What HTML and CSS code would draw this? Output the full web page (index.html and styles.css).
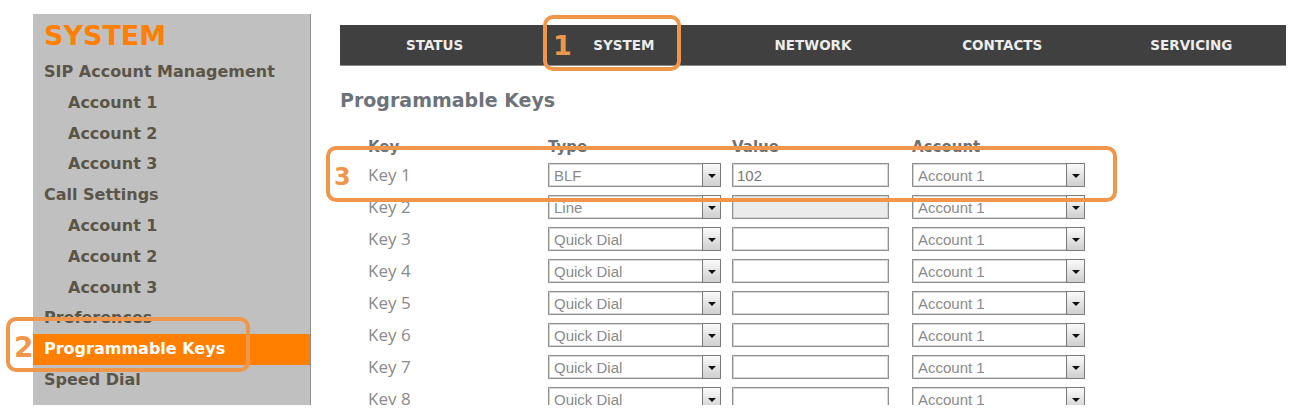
FILE: index.html
```html
<!DOCTYPE html>
<html lang="en">
<head>
  <meta charset="UTF-8">
  <meta name="viewport" content="width=device-width, initial-scale=1.0">
  <title>Programmable Keys</title>
  <link rel="stylesheet" href="styles.css">
</head>
<body>
  <div class="page">
    <div class="sidebar">
      <h1>SYSTEM</h1>
      <ul class="menu">
        <li class="group">SIP Account Management</li>
        <li class="sub">Account 1</li>
        <li class="sub">Account 2</li>
        <li class="sub">Account 3</li>
        <li class="group">Call Settings</li>
        <li class="sub">Account 1</li>
        <li class="sub">Account 2</li>
        <li class="sub">Account 3</li>
        <li class="group">Preferences</li>
        <li class="group active">Programmable Keys</li>
        <li class="group">Speed Dial</li>
      </ul>
    </div>

    <div class="main">
      <div class="nav">
        <span>STATUS</span>
        <span>SYSTEM</span>
        <span>NETWORK</span>
        <span>CONTACTS</span>
        <span>SERVICING</span>
      </div>

      <h2>Programmable Keys</h2>

      <div class="keys">
        <div class="head">Key</div>
        <div class="head">Type</div>
        <div class="head">Value</div>
        <div class="head">Account</div>

        <div class="key">Key 1</div>
        <div class="select"><select><option>BLF</option></select><span class="select-btn"></span></div>
        <input class="value" type="text" value="102">
        <div class="select"><select><option>Account 1</option></select><span class="select-btn"></span></div>

        <div class="key">Key 2</div>
        <div class="select"><select><option>Line</option></select><span class="select-btn"></span></div>
        <input class="value" type="text" disabled>
        <div class="select"><select><option>Account 1</option></select><span class="select-btn"></span></div>

        <div class="key">Key 3</div>
        <div class="select"><select><option>Quick Dial</option></select><span class="select-btn"></span></div>
        <input class="value" type="text">
        <div class="select"><select><option>Account 1</option></select><span class="select-btn"></span></div>

        <div class="key">Key 4</div>
        <div class="select"><select><option>Quick Dial</option></select><span class="select-btn"></span></div>
        <input class="value" type="text">
        <div class="select"><select><option>Account 1</option></select><span class="select-btn"></span></div>

        <div class="key">Key 5</div>
        <div class="select"><select><option>Quick Dial</option></select><span class="select-btn"></span></div>
        <input class="value" type="text">
        <div class="select"><select><option>Account 1</option></select><span class="select-btn"></span></div>

        <div class="key">Key 6</div>
        <div class="select"><select><option>Quick Dial</option></select><span class="select-btn"></span></div>
        <input class="value" type="text">
        <div class="select"><select><option>Account 1</option></select><span class="select-btn"></span></div>

        <div class="key">Key 7</div>
        <div class="select"><select><option>Quick Dial</option></select><span class="select-btn"></span></div>
        <input class="value" type="text">
        <div class="select"><select><option>Account 1</option></select><span class="select-btn"></span></div>

        <div class="key">Key 8</div>
        <div class="select"><select><option>Quick Dial</option></select><span class="select-btn"></span></div>
        <input class="value" type="text">
        <div class="select"><select><option>Account 1</option></select><span class="select-btn"></span></div>
      </div>
    </div>

    <!-- callouts drawn over the screenshot -->
    <div class="callout callout-1"><span>1</span></div>
    <div class="callout callout-2"><span>2</span></div>
    <div class="callout callout-3"><span>3</span></div>
  </div>
</body>
</html>
```

FILE: styles.css
```css
body {
  margin: 0;
  background: #fff;
  font-family: "DejaVu Sans", Verdana, sans-serif;
}

.page {
  position: relative;
  display: flex;
  align-items: flex-start;
  height: 405px;
  overflow: hidden;
}

/* left menu */
.sidebar {
  margin: 14px 0 0 33px;
  width: 278px;
  height: 391px;
  flex: none;
  background: #c0c0c0;
  border-right: 1px solid #8e8e8e;
  padding-top: 6px;
  box-sizing: border-box;
}
.sidebar h1 {
  margin: 0 0 5px;
  padding-left: 11px;
  font-size: 27px;
  line-height: 32px;
  font-weight: bold;
  color: #ff8000;
}
.menu {
  list-style: none;
  margin: 0;
  padding: 0;
}
.menu li {
  height: 30.8px;
  line-height: 30.8px;
  font-size: 16px;
  font-weight: bold;
  color: #5b5548;
  white-space: nowrap;
}
.menu .group {
  padding-left: 11px;
}
.menu .sub {
  padding-left: 35px;
}
.menu .active {
  background: #ff7f00;
  color: #fff;
}

/* right part */
.main {
  margin-left: 29px;
  padding-top: 25px;
}
.nav {
  display: grid;
  grid-template-columns: repeat(5, 1fr);
  width: 946px;
  height: 40px;
  background: #404040;
  border-bottom: 1px solid #8c8c8c;
}
.nav span {
  text-align: center;
  line-height: 40px;
  font-size: 13.5px;
  font-weight: bold;
  color: #ececec;
}
.main h2 {
  margin: 22px 0 0;
  font-size: 19px;
  line-height: 24px;
  color: #6c737a;
}

.keys {
  display: grid;
  grid-template-columns: 180px 184px 180px 173px;
  grid-template-rows: 18px;
  grid-auto-rows: 24px;
  row-gap: 8px;
  margin: 25px 0 0 28px;
}
.keys .head {
  font-size: 15px;
  font-weight: bold;
  line-height: 20px;
  color: #707070;
}
.key {
  font-family: "Open Sans", sans-serif;
  font-size: 17px;
  line-height: 24px;
  color: #8a8a8a;
}

.select {
  display: flex;
  width: 173px;
  height: 24px;
  box-sizing: border-box;
  border: 1px solid #8f8f8f;
  box-shadow: inset 0 0 0 1px #d4d4d4;
  background: #fff;
}
.select select {
  flex: 1;
  appearance: none;
  -webkit-appearance: none;
  border: none;
  background: transparent;
  padding: 0 0 0 5px;
  font-family: "Liberation Sans", Arial, sans-serif;
  font-size: 15px;
  color: #8a8a8a;
  outline: none;
}
.select-btn {
  position: relative;
  width: 17px;
  flex: none;
  border: 1px solid #7a7a7a;
  margin: -1px -1px -1px 0;
  background: linear-gradient(#fbfbfb, #cfcfcf);
}
.select-btn::after {
  content: "";
  position: absolute;
  left: 5px;
  top: 10px;
  border-left: 4px solid transparent;
  border-right: 4px solid transparent;
  border-top: 4px solid #111;
}

.value {
  width: 157px;
  height: 24px;
  box-sizing: border-box;
  margin: 0;
  border: 1px solid #8f8f8f;
  box-shadow: inset 0 0 0 1px #d4d4d4;
  padding: 0 4px;
  font-family: "Liberation Sans", Arial, sans-serif;
  font-size: 15px;
  color: #777;
  outline: none;
}
.value:disabled {
  background: #ebebeb;
}

/* orange numbered callouts */
.callout {
  position: absolute;
  border: 4px solid #f0964a;
  border-radius: 10px;
  box-sizing: border-box;
}
.callout span {
  position: absolute;
  font-weight: bold;
  color: #f0964a;
  line-height: 1;
}
.callout-1 {
  left: 543px;
  top: 15px;
  width: 138px;
  height: 56px;
}
.callout-1 span {
  left: 6px;
  top: 13px;
  font-size: 27px;
}
.callout-2 {
  left: 6px;
  top: 317px;
  width: 244px;
  height: 55px;
}
.callout-2 span {
  left: 4px;
  top: 13px;
  font-size: 28px;
}
.callout-3 {
  left: 326px;
  top: 146px;
  width: 791px;
  height: 56px;
}
.callout-3 span {
  left: 4px;
  top: 15px;
  font-size: 24px;
}
```
